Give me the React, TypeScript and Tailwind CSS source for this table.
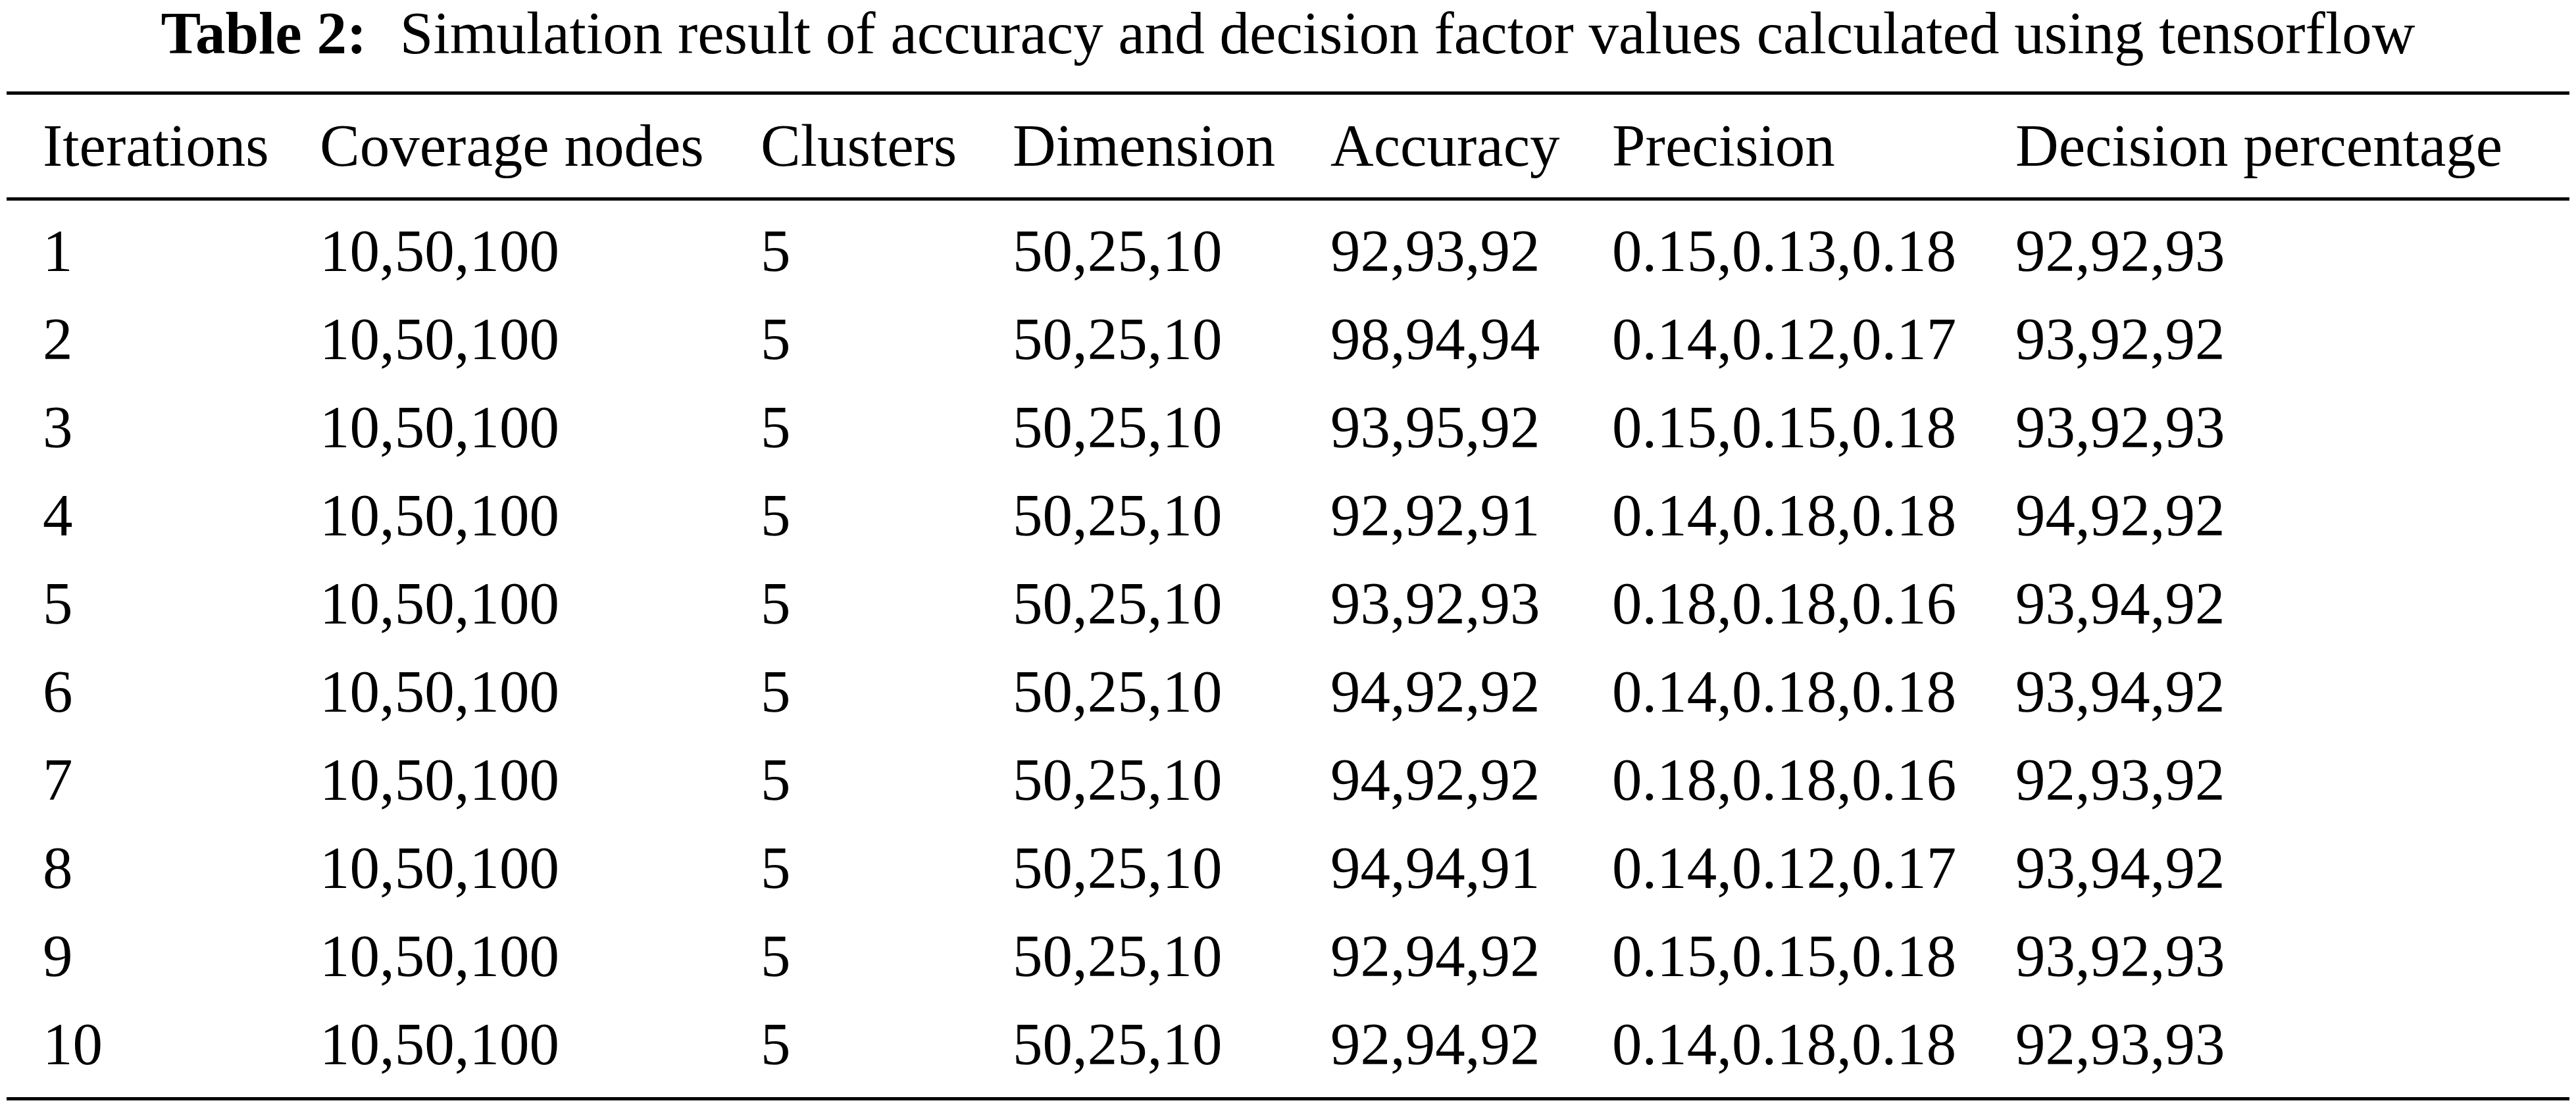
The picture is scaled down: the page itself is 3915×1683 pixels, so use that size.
import React from 'react';

// rows of the simulation table: iteration, coverage, clusters, dimension, accuracy, precision, decision
const rows: string[][] = [
  ['1', '10,50,100', '5', '50,25,10', '92,93,92', '0.15,0.13,0.18', '92,92,93'],
  ['2', '10,50,100', '5', '50,25,10', '98,94,94', '0.14,0.12,0.17', '93,92,92'],
  ['3', '10,50,100', '5', '50,25,10', '93,95,92', '0.15,0.15,0.18', '93,92,93'],
  ['4', '10,50,100', '5', '50,25,10', '92,92,91', '0.14,0.18,0.18', '94,92,92'],
  ['5', '10,50,100', '5', '50,25,10', '93,92,93', '0.18,0.18,0.16', '93,94,92'],
  ['6', '10,50,100', '5', '50,25,10', '94,92,92', '0.14,0.18,0.18', '93,94,92'],
  ['7', '10,50,100', '5', '50,25,10', '94,92,92', '0.18,0.18,0.16', '92,93,92'],
  ['8', '10,50,100', '5', '50,25,10', '94,94,91', '0.14,0.12,0.17', '93,94,92'],
  ['9', '10,50,100', '5', '50,25,10', '92,94,92', '0.15,0.15,0.18', '93,92,93'],
  ['10', '10,50,100', '5', '50,25,10', '92,94,92', '0.14,0.18,0.18', '92,93,93'],
];

const headers = ['Iterations', 'Coverage nodes', 'Clusters', 'Dimension', 'Accuracy', 'Precision', 'Decision percentage'];

const cols = 'grid grid-cols-[421px_670px_383px_483px_428px_613px_1fr] pl-[55px]';

const App: React.FC = () => {
  return (
    <div className="w-[3915px] h-[1683px] bg-white text-black font-['Liberation_Serif','Times_New_Roman',serif] text-[91px] overflow-hidden">
      {/* caption */}
      <div className="h-[139px] text-center leading-[101px] whitespace-pre">
        <span className="font-bold">Table 2:</span>
        <span className="ml-[5px]">{'  '}Simulation result of accuracy and decision factor values calculated using tensorflow</span>
      </div>

      <div className="ml-[10px] w-[3895px]">
        <div className="border-t-[5px] border-b-[5px] border-black pt-[11px] pb-[11px]">
          <div className={`${cols} leading-[134px] whitespace-nowrap`}>
            {headers.map(h => (
              <div key={h}>{h}</div>
            ))}
          </div>
        </div>

        <div className="border-b-[5px] border-black pt-[10px] pb-[13px]">
          {rows.map(r => (
            <div key={r[0]} className={`${cols} leading-[134px] whitespace-nowrap`}>
              {r.map((c, i) => (
                <div key={i}>{c}</div>
              ))}
            </div>
          ))}
        </div>
      </div>
    </div>
  );
};

export default App;
